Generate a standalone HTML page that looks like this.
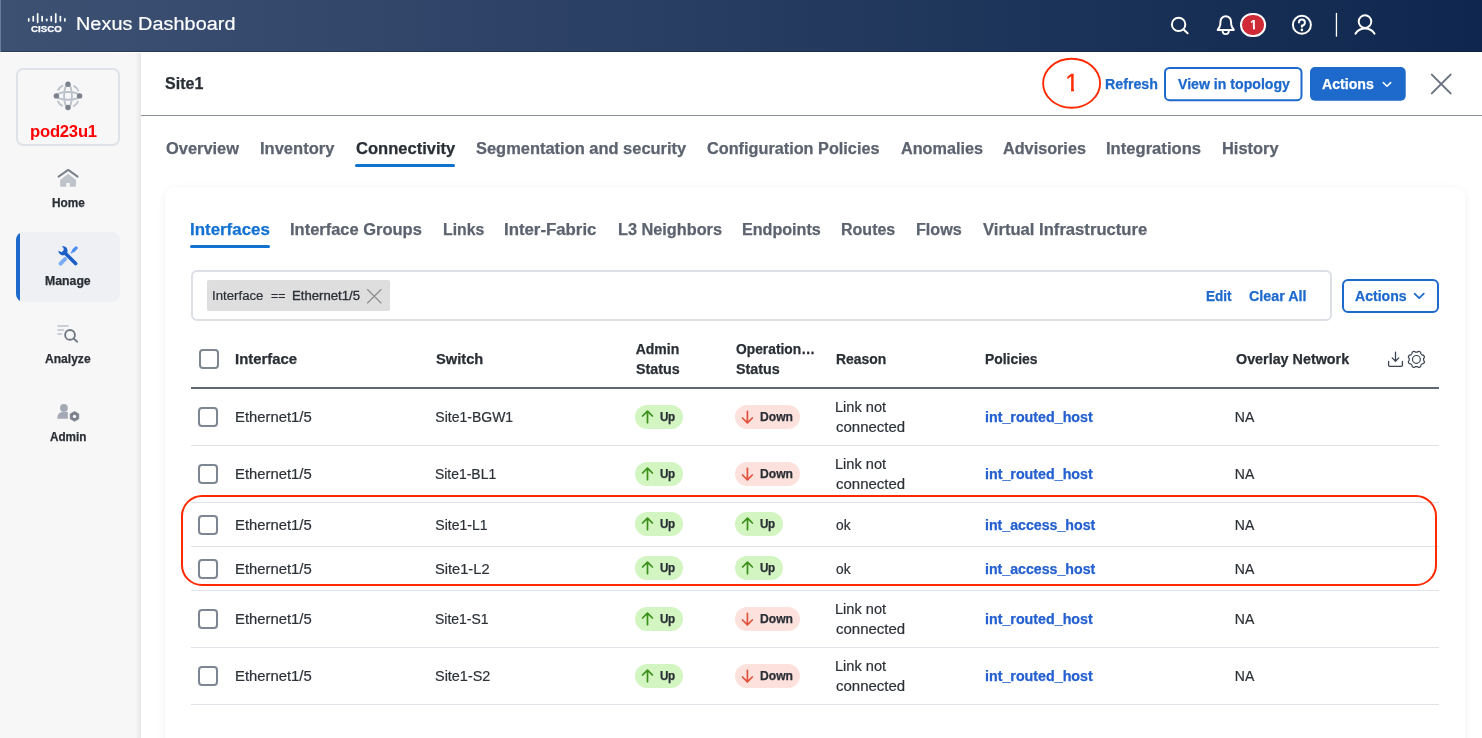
<!DOCTYPE html>
<html lang="en"><head><meta charset="utf-8"><title>Nexus Dashboard</title>
<style>
html,body{margin:0;padding:0}
body{width:1482px;height:738px;overflow:hidden;position:relative;background:#fff;font-family:"Liberation Sans",sans-serif}
.a{position:absolute}
.t{position:absolute;line-height:1;white-space:pre;transform-origin:0 0}
svg{position:absolute;overflow:visible}
.cb{position:absolute;width:16px;height:16px;border:2px solid #7e8694;border-radius:4px;background:#fff}
.hl{position:absolute;left:191px;width:1248px;height:1px;background:#dfe3e8}
.up{position:absolute;width:48px;height:24px;border-radius:12px;background:#d2f5c1}
.dn{position:absolute;width:65px;height:24px;border-radius:12px;background:#fde1dd}
</style></head><body>
<div class="a" style="left:0;top:0;width:1482px;height:738px;will-change:transform">
<!-- header -->
<div class="a" style="left:0;top:0;width:1482px;height:52px;background:linear-gradient(90deg,#3d5173 0%,#0f274e 100%)"></div>
<div class="a" style="left:0;top:51px;width:1482px;height:1px;background:rgba(10,25,60,.35)"></div>
<div class="a" style="left:0;top:0;width:1px;height:52px;background:#6b7d9b"></div>
<svg style="left:0;top:0" width="1482" height="52" viewBox="0 0 1482 52">
 <g fill="#fff">
  <rect x="27.9" y="18" width="1.7" height="3.8" rx=".8"/><rect x="32.4" y="15.8" width="1.7" height="6" rx=".8"/><rect x="36.8" y="13.1" width="1.7" height="10.1" rx=".8"/><rect x="41.3" y="15.8" width="1.7" height="6" rx=".8"/><rect x="45.9" y="18.4" width="1.7" height="3.2" rx=".8"/><rect x="50.4" y="15.8" width="1.7" height="6" rx=".8"/><rect x="54.9" y="13.1" width="1.7" height="10.1" rx=".8"/><rect x="59.5" y="15.8" width="1.7" height="6" rx=".8"/><rect x="64" y="18" width="1.7" height="3.8" rx=".8"/>
 </g>
 <g fill="none" stroke="#fff" stroke-width="2" stroke-linecap="round" stroke-linejoin="round">
  <circle cx="1178.6" cy="24.4" r="6.7"/><path d="M1183.6 29.6 L1187.6 33.3"/>
  <path d="M1217.7 29.9 L1219.3 27.4 C1220.5 25.5 1220.5 23.5 1220.5 21.4 A5.25 5.25 0 0 1 1231 21.4 C1231 23.5 1231 25.5 1232.2 27.4 L1233.8 29.9 Z"/><path d="M1222.6 31 A3.1 3.1 0 0 0 1228.8 31" stroke-width="1.8"/>
  <circle cx="1301.9" cy="24.8" r="9"/>
  <path d="M1298.9 22.6 A3 3 0 1 1 1301.9 25.6 L1301.9 26.8" stroke-width="2"/>
  <circle cx="1365" cy="21.6" r="6.3"/><path d="M1355.5 33.6 A11.5 11.5 0 0 1 1374.5 33.6"/>
 </g>
 <circle cx="1301.9" cy="29.9" r="1.3" fill="#fff"/>
 <rect x="1335.8" y="12.9" width="1.3" height="23.8" fill="#fff"/>
 <rect x="1241" y="13.9" width="24.1" height="22.1" rx="11.05" fill="#cf2a36" stroke="#fff" stroke-width="2"/>
</svg>
<!-- sidebar -->
<div class="a" style="left:0;top:53px;width:141px;height:685px;background:#f7f7f7"></div>
<div class="a" style="left:135px;top:53px;width:6px;height:685px;background:linear-gradient(90deg,rgba(0,0,0,0),rgba(0,0,0,.065))"></div>
<div class="a" style="left:16px;top:68px;width:100px;height:74px;border:2px solid #dfe3e8;border-radius:7px"></div>
<div class="a" style="left:16px;top:232px;width:104px;height:70px;border-radius:8px;background:#eef0f3;overflow:hidden"><div class="a" style="left:0;top:0;width:4px;height:70px;background:#1d69cc"></div></div>
<svg style="left:0;top:52px" width="141" height="686" viewBox="0 52 141 686">
 <!-- globe -->
 <g fill="none" stroke="#bcc2cb" stroke-width="1.9">
  <ellipse cx="68" cy="95.9" rx="3.9" ry="11.6"/><ellipse cx="68" cy="95.9" rx="11.6" ry="3.9"/>
  <circle cx="68" cy="95.9" r="11.6" stroke-dasharray="7.4 10.82" stroke-dashoffset="-5.41"/>
 </g>
 <g fill="#7b828e"><circle cx="68" cy="84.3" r="2.7"/><circle cx="68" cy="107.5" r="2.7"/><circle cx="56.4" cy="95.9" r="2.7"/><circle cx="79.6" cy="95.9" r="2.7"/></g>
 <!-- home -->
 <path d="M60.1 180 L68.2 173.8 L76 180 L76 185.3 Q76 186.8 74.5 186.8 L69.8 186.8 L69.8 183 L66.3 183 L66.3 186.8 L61.6 186.8 Q60.1 186.8 60.1 185.3 Z" fill="#bec3cc"/>
 <path d="M58.6 176.6 L68.2 169.9 L77.6 176.6" fill="none" stroke="#7b828e" stroke-width="2" stroke-linecap="round" stroke-linejoin="round"/>
 <!-- manage -->
 <g stroke-linecap="round" fill="none">
  <path d="M60.6 263.6 L65 259.2" stroke="#7baaf7" stroke-width="4"/>
  <path d="M71.5 252.6 L75.6 248.4" stroke="#6ea1f6" stroke-width="2"/>
  <path d="M73.6 250.5 L76.2 247.9" stroke="#4d8df2" stroke-width="3.2"/>
  <path d="M64.6 252.6 L75.6 263.6" stroke="#1b5fc7" stroke-width="3.6"/>
 </g>
 <path d="M61.6 246.4 A4.6 4.6 0 1 1 58.4 250.6 L61.2 252.2 L63.6 250.6 L63.6 248 Z" fill="#1b5fc7"/>
 <!-- analyze -->
 <g fill="none" stroke="#bcc1ca" stroke-width="1.6" stroke-linecap="round"><path d="M58 326 L68 326"/><path d="M58 330 L63.6 330"/><path d="M58 334 L61.6 334"/></g>
 <g fill="none" stroke="#6f7783" stroke-width="1.9" stroke-linecap="round"><circle cx="70" cy="334.9" r="4.9"/><path d="M73.8 338.6 L77.2 341.7"/></g>
 <!-- admin -->
 <circle cx="63.9" cy="407.9" r="3.9" fill="#a4aab5"/>
 <path d="M57.2 418.8 Q57.6 412 62.5 412 L67.9 412 L67.9 418.8 Z" fill="#a4aab5"/>
 <path d="M74.5 411.5 L78.74 413.95 L78.74 418.85 L74.5 421.3 L70.26 418.85 L70.26 413.95 Z" fill="#7b828e" stroke="#7b828e" stroke-width="0.8" stroke-linejoin="round"/>
 <circle cx="74.5" cy="416.4" r="1.7" fill="#f7f7f7"/>
</svg>
<!-- panel -->
<div class="a" style="left:141px;top:115px;width:1341px;height:1px;background:#8d939e"></div>
<!-- top right controls -->
<svg style="left:1030px;top:52px" width="452" height="64" viewBox="1030 52 452 64">
 <ellipse cx="1071.6" cy="83.3" rx="28.5" ry="24.5" fill="none" stroke="#ff2a00" stroke-width="1.9"/>
 <rect x="1165" y="68" width="136.5" height="32.2" rx="4.5" fill="#fff" stroke="#1d69cc" stroke-width="2"/>
 <rect x="1310" y="67" width="95.7" height="33.8" rx="5" fill="#1d69cc"/>
 <path d="M1383.3 82.6 L1387 86.2 L1390.7 82.6" fill="none" stroke="#fff" stroke-width="1.5" stroke-linecap="round" stroke-linejoin="round"/>
 <path d="M1431.8 74.6 L1450.6 93.4 M1450.6 74.6 L1431.8 93.4" fill="none" stroke="#6b7280" stroke-width="2" stroke-linecap="round"/>
</svg>
<!-- tab underlines -->
<div class="a" style="left:355px;top:164px;width:100px;height:3px;border-radius:1.5px;background:#1272d2"></div>
<!-- card -->
<div class="a" style="left:165px;top:187px;width:1300px;height:600px;border-radius:10px;background:#fff;box-shadow:0 2px 9px rgba(0,0,0,.065)"></div>
<div class="a" style="left:190px;top:245px;width:80px;height:3px;border-radius:1.5px;background:#1272d2"></div>
<!-- filter -->
<div class="a" style="left:191px;top:270px;width:1137px;height:47px;border:2px solid #dcdfe5;border-radius:6px;background:#fff"></div>
<div class="a" style="left:207px;top:280px;width:183px;height:31px;border-radius:2px;background:#dedede"></div>
<div class="a" style="left:1342px;top:279px;width:93px;height:30px;border:2px solid #1d69cc;border-radius:6px;background:#fff"></div>
<svg style="left:180px;top:260px" width="1280" height="130" viewBox="180 260 1280 130">
 <path d="M367.5 289.5 L381 303 M381 289.5 L367.5 303" fill="none" stroke="#8a8a8a" stroke-width="1.1" stroke-linecap="round"/>
 <path d="M1414.6 293.6 L1419.2 298.2 L1423.8 293.6" fill="none" stroke="#1d69cc" stroke-width="1.7" stroke-linecap="round" stroke-linejoin="round"/>
 <!-- download -->
 <g fill="none" stroke="#3c4350" stroke-width="1.3" stroke-linecap="round" stroke-linejoin="round">
  <path d="M1388.6 361.4 L1388.6 365.2 Q1388.6 366.3 1389.7 366.3 L1401.3 366.3 Q1402.4 366.3 1402.4 365.2 L1402.4 361.4"/>
  <path d="M1395.5 352.2 L1395.5 361.3 M1392.2 357.9 L1395.5 361.3 L1398.8 357.9"/>
 </g>
 <!-- gear -->
 <g fill="none" stroke="#3c4350" stroke-width="1.2" stroke-linejoin="round">
  <circle cx="1416.4" cy="359.4" r="3.9"/>
  <path id="gear" d="M1423.58 359.40 L1423.58 359.68 L1423.58 359.96 L1423.60 360.25 L1423.73 360.56 L1424.05 360.92 L1424.35 361.31 L1424.43 361.67 L1424.39 362.00 L1424.30 362.31 L1424.18 362.62 L1424.04 362.92 L1423.88 363.21 L1423.68 363.48 L1423.37 363.67 L1422.89 363.73 L1422.41 363.76 L1422.10 363.89 L1421.87 364.08 L1421.68 364.28 L1421.48 364.48 L1421.28 364.68 L1421.08 364.87 L1420.89 365.10 L1420.76 365.41 L1420.73 365.89 L1420.67 366.37 L1420.48 366.68 L1420.21 366.88 L1419.92 367.04 L1419.62 367.18 L1419.31 367.30 L1419.00 367.39 L1418.67 367.43 L1418.31 367.35 L1417.92 367.05 L1417.56 366.73 L1417.25 366.60 L1416.96 366.58 L1416.68 366.58 L1416.40 366.58 L1416.12 366.58 L1415.84 366.58 L1415.55 366.60 L1415.24 366.73 L1414.88 367.05 L1414.49 367.35 L1414.13 367.43 L1413.80 367.39 L1413.49 367.30 L1413.18 367.18 L1412.88 367.04 L1412.59 366.88 L1412.32 366.68 L1412.13 366.37 L1412.07 365.89 L1412.04 365.41 L1411.91 365.10 L1411.72 364.87 L1411.52 364.68 L1411.32 364.48 L1411.12 364.28 L1410.93 364.08 L1410.70 363.89 L1410.39 363.76 L1409.91 363.73 L1409.43 363.67 L1409.12 363.48 L1408.92 363.21 L1408.76 362.92 L1408.62 362.62 L1408.50 362.31 L1408.41 362.00 L1408.37 361.67 L1408.45 361.31 L1408.75 360.92 L1409.07 360.56 L1409.20 360.25 L1409.22 359.96 L1409.22 359.68 L1409.22 359.40 L1409.22 359.12 L1409.22 358.84 L1409.20 358.55 L1409.07 358.24 L1408.75 357.88 L1408.45 357.49 L1408.37 357.13 L1408.41 356.80 L1408.50 356.49 L1408.62 356.18 L1408.76 355.88 L1408.92 355.59 L1409.12 355.32 L1409.43 355.13 L1409.91 355.07 L1410.39 355.04 L1410.70 354.91 L1410.93 354.72 L1411.12 354.52 L1411.32 354.32 L1411.52 354.12 L1411.72 353.93 L1411.91 353.70 L1412.04 353.39 L1412.07 352.91 L1412.13 352.43 L1412.32 352.12 L1412.59 351.92 L1412.88 351.76 L1413.18 351.62 L1413.49 351.50 L1413.80 351.41 L1414.13 351.37 L1414.49 351.45 L1414.88 351.75 L1415.24 352.07 L1415.55 352.20 L1415.84 352.22 L1416.12 352.22 L1416.40 352.22 L1416.68 352.22 L1416.96 352.22 L1417.25 352.20 L1417.56 352.07 L1417.92 351.75 L1418.31 351.45 L1418.67 351.37 L1419.00 351.41 L1419.31 351.50 L1419.62 351.62 L1419.92 351.76 L1420.21 351.92 L1420.48 352.12 L1420.67 352.43 L1420.73 352.91 L1420.76 353.39 L1420.89 353.70 L1421.08 353.93 L1421.28 354.12 L1421.48 354.32 L1421.68 354.52 L1421.87 354.72 L1422.10 354.91 L1422.41 355.04 L1422.89 355.07 L1423.37 355.13 L1423.68 355.32 L1423.88 355.59 L1424.04 355.88 L1424.18 356.18 L1424.30 356.49 L1424.39 356.80 L1424.43 357.13 L1424.35 357.49 L1424.05 357.88 L1423.73 358.24 L1423.60 358.55 L1423.58 358.84 L1423.58 359.12 Z"/>
 </g>
</svg>
<!-- table -->
<div class="cb" style="left:199px;top:349px"></div>
<div class="a" style="left:191px;top:387px;width:1248px;height:2px;background:#5f6774"></div>
<div class="cb" style="left:198.3px;top:407.0px"></div>
<div class="hl" style="top:445px"></div>
<div class="up" style="left:635px;top:405.0px"></div>
<div class="dn" style="left:735px;top:405.0px"></div>
<div class="cb" style="left:198.3px;top:464.0px"></div>
<div class="hl" style="top:502px"></div>
<div class="up" style="left:635px;top:462.0px"></div>
<div class="dn" style="left:735px;top:462.0px"></div>
<div class="cb" style="left:198.3px;top:515.0px"></div>
<div class="hl" style="top:546px"></div>
<div class="up" style="left:635px;top:512.0px"></div>
<div class="up" style="left:735px;top:512.0px"></div>
<div class="cb" style="left:198.3px;top:559.0px"></div>
<div class="hl" style="top:590px"></div>
<div class="up" style="left:635px;top:556.0px"></div>
<div class="up" style="left:735px;top:556.0px"></div>
<div class="cb" style="left:198.3px;top:609.0px"></div>
<div class="hl" style="top:647px"></div>
<div class="up" style="left:635px;top:607.0px"></div>
<div class="dn" style="left:735px;top:607.0px"></div>
<div class="cb" style="left:198.3px;top:666.0px"></div>
<div class="hl" style="top:704px"></div>
<div class="up" style="left:635px;top:664.0px"></div>
<div class="dn" style="left:735px;top:664.0px"></div>
<svg style="left:0;top:0" width="1482" height="738" viewBox="0 0 1482 738"><g fill="none" stroke-width="1.7" stroke-linecap="round" stroke-linejoin="round"><path d="M647.5 422.7 L647.5 411.1 M642.6 416.0 L647.5 411.1 L652.4 416.0" stroke="#3a8f1a"/><path d="M747.4 411.3 L747.4 422.9 M742.5 418.0 L747.4 422.9 L752.3 418.0" stroke="#e0523c"/><path d="M647.5 479.7 L647.5 468.1 M642.6 473.0 L647.5 468.1 L652.4 473.0" stroke="#3a8f1a"/><path d="M747.4 468.3 L747.4 479.9 M742.5 475.0 L747.4 479.9 L752.3 475.0" stroke="#e0523c"/><path d="M647.5 529.7 L647.5 518.1 M642.6 523.0 L647.5 518.1 L652.4 523.0" stroke="#3a8f1a"/><path d="M747.5 529.7 L747.5 518.1 M742.6 523.0 L747.5 518.1 L752.4 523.0" stroke="#3a8f1a"/><path d="M647.5 573.7 L647.5 562.1 M642.6 567.0 L647.5 562.1 L652.4 567.0" stroke="#3a8f1a"/><path d="M747.5 573.7 L747.5 562.1 M742.6 567.0 L747.5 562.1 L752.4 567.0" stroke="#3a8f1a"/><path d="M647.5 624.7 L647.5 613.1 M642.6 618.0 L647.5 613.1 L652.4 618.0" stroke="#3a8f1a"/><path d="M747.4 613.3 L747.4 624.9 M742.5 620.0 L747.4 624.9 L752.3 620.0" stroke="#e0523c"/><path d="M647.5 681.7 L647.5 670.1 M642.6 675.0 L647.5 670.1 L652.4 675.0" stroke="#3a8f1a"/><path d="M747.4 670.3 L747.4 681.9 M742.5 677.0 L747.4 681.9 L752.3 677.0" stroke="#e0523c"/></g></svg>
<!-- red highlight -->
<div class="a" style="left:181.3px;top:495px;width:1251.8px;height:86.8px;border:2px solid #ff2a00;border-radius:21px"></div>
<span class="t" style="left:76.06px;top:14.66px;font-size:18px;font-weight:400;color:#fff;letter-spacing:0.067px;transform:scaleX(1.1000);-webkit-text-stroke-width:0.2px;">Nexus Dashboard</span>
<span class="t" style="left:31.33px;top:24.47px;font-size:9.6px;font-weight:700;color:#fff;letter-spacing:-0.000px;transform:scaleX(1.0146);-webkit-text-stroke-width:0.25px;">CISCO</span>
<span class="t" style="left:165.05px;top:75.56px;font-size:16px;font-weight:700;color:#2a2f36;letter-spacing:0.000px;-webkit-text-stroke-width:0.25px;">Site1</span>
<span class="t" style="left:1065.25px;top:70.68px;font-size:24px;font-weight:400;color:#ff2a00;letter-spacing:0.000px;-webkit-text-stroke:0.35px #ff2a00;">1</span>
<span class="t" style="left:1105.43px;top:77.35px;font-size:14px;font-weight:700;color:#1d69cc;letter-spacing:-0.000px;transform:scaleX(1.0152);-webkit-text-stroke-width:0.25px;">Refresh</span>
<span class="t" style="left:1177.74px;top:77.35px;font-size:14px;font-weight:700;color:#1d69cc;letter-spacing:0.000px;transform:scaleX(1.0089);-webkit-text-stroke-width:0.25px;">View in topology</span>
<span class="t" style="left:1322.38px;top:77.35px;font-size:14px;font-weight:700;color:#fff;letter-spacing:0.000px;transform:scaleX(1.0095);-webkit-text-stroke-width:0.25px;">Actions</span>
<span class="t" style="left:165.54px;top:140.96px;font-size:16px;font-weight:700;color:#5c636f;letter-spacing:0.000px;transform:scaleX(1.0257);-webkit-text-stroke-width:0.25px;">Overview</span>
<span class="t" style="left:259.51px;top:140.96px;font-size:16px;font-weight:700;color:#5c636f;letter-spacing:0.000px;transform:scaleX(1.0322);-webkit-text-stroke-width:0.25px;">Inventory</span>
<span class="t" style="left:355.53px;top:140.96px;font-size:16px;font-weight:700;color:#2a2f36;letter-spacing:0.000px;transform:scaleX(1.0343);-webkit-text-stroke-width:0.25px;">Connectivity</span>
<span class="t" style="left:475.53px;top:140.96px;font-size:16px;font-weight:700;color:#5c636f;letter-spacing:0.000px;transform:scaleX(1.0279);-webkit-text-stroke-width:0.25px;">Segmentation and security</span>
<span class="t" style="left:707.04px;top:140.96px;font-size:16px;font-weight:700;color:#5c636f;letter-spacing:0.000px;transform:scaleX(1.0159);-webkit-text-stroke-width:0.25px;">Configuration Policies</span>
<span class="t" style="left:900.64px;top:140.96px;font-size:16px;font-weight:700;color:#5c636f;letter-spacing:-0.000px;transform:scaleX(1.0136);-webkit-text-stroke-width:0.25px;">Anomalies</span>
<span class="t" style="left:1003.14px;top:140.96px;font-size:16px;font-weight:700;color:#5c636f;letter-spacing:0.000px;transform:scaleX(1.0135);-webkit-text-stroke-width:0.25px;">Advisories</span>
<span class="t" style="left:1106.25px;top:140.96px;font-size:16px;font-weight:700;color:#5c636f;letter-spacing:0.000px;transform:scaleX(1.0377);-webkit-text-stroke-width:0.25px;">Integrations</span>
<span class="t" style="left:1222.01px;top:140.96px;font-size:16px;font-weight:700;color:#5c636f;letter-spacing:0.000px;transform:scaleX(1.0256);-webkit-text-stroke-width:0.25px;">History</span>
<span class="t" style="left:189.98px;top:221.96px;font-size:16px;font-weight:700;color:#1272d2;letter-spacing:0.000px;transform:scaleX(1.0561);-webkit-text-stroke-width:0.25px;">Interfaces</span>
<span class="t" style="left:290.26px;top:221.96px;font-size:16px;font-weight:700;color:#5c636f;letter-spacing:0.000px;transform:scaleX(1.0296);-webkit-text-stroke-width:0.25px;">Interface Groups</span>
<span class="t" style="left:442.56px;top:221.96px;font-size:16px;font-weight:700;color:#5c636f;letter-spacing:0.000px;transform:scaleX(0.9862);-webkit-text-stroke-width:0.25px;">Links</span>
<span class="t" style="left:503.99px;top:221.96px;font-size:16px;font-weight:700;color:#5c636f;letter-spacing:0.000px;transform:scaleX(1.0501);-webkit-text-stroke-width:0.25px;">Inter-Fabric</span>
<span class="t" style="left:617.52px;top:221.96px;font-size:16px;font-weight:700;color:#5c636f;letter-spacing:0.000px;transform:scaleX(1.0173);-webkit-text-stroke-width:0.25px;">L3 Neighbors</span>
<span class="t" style="left:742.03px;top:221.96px;font-size:16px;font-weight:700;color:#5c636f;letter-spacing:0.000px;transform:scaleX(1.0064);-webkit-text-stroke-width:0.25px;">Endpoints</span>
<span class="t" style="left:841.04px;top:221.96px;font-size:16px;font-weight:700;color:#5c636f;letter-spacing:0.000px;-webkit-text-stroke-width:0.25px;">Routes</span>
<span class="t" style="left:915.78px;top:221.96px;font-size:16px;font-weight:700;color:#5c636f;letter-spacing:-0.000px;transform:scaleX(1.0075);-webkit-text-stroke-width:0.25px;">Flows</span>
<span class="t" style="left:982.93px;top:221.96px;font-size:16px;font-weight:700;color:#5c636f;letter-spacing:0.000px;transform:scaleX(1.0395);-webkit-text-stroke-width:0.25px;">Virtual Infrastructure</span>
<span class="t" style="left:211.88px;top:289.84px;font-size:12px;font-weight:400;color:#2a2f36;letter-spacing:0.009px;transform:scaleX(1.1000);-webkit-text-stroke-width:0.2px;">Interface</span>
<span class="t" style="left:270.70px;top:289.84px;font-size:12px;font-weight:400;color:#2a2f36;letter-spacing:0.000px;transform:scaleX(1.0209);-webkit-text-stroke-width:0.2px;">==</span>
<span class="t" style="left:291.67px;top:289.84px;font-size:12px;font-weight:400;color:#2a2f36;letter-spacing:0.000px;transform:scaleX(1.0968);-webkit-text-stroke:0.3px #2a2f36;">Ethernet1/5</span>
<span class="t" style="left:1205.86px;top:289.00px;font-size:14px;font-weight:700;color:#1d69cc;letter-spacing:-0.049px;transform:scaleX(0.9700);-webkit-text-stroke-width:0.25px;">Edit</span>
<span class="t" style="left:1248.80px;top:289.00px;font-size:14px;font-weight:700;color:#1d69cc;letter-spacing:0.000px;transform:scaleX(1.0218);-webkit-text-stroke-width:0.25px;">Clear All</span>
<span class="t" style="left:1355.18px;top:289.00px;font-size:14px;font-weight:700;color:#1d69cc;letter-spacing:-0.000px;transform:scaleX(1.0055);-webkit-text-stroke-width:0.25px;">Actions</span>
<span class="t" style="left:235.29px;top:351.90px;font-size:14px;font-weight:700;color:#2a2f36;letter-spacing:0.000px;transform:scaleX(1.0611);-webkit-text-stroke-width:0.25px;">Interface</span>
<span class="t" style="left:435.62px;top:351.90px;font-size:14px;font-weight:700;color:#2a2f36;letter-spacing:0.000px;transform:scaleX(1.0471);-webkit-text-stroke-width:0.25px;">Switch</span>
<span class="t" style="left:635.68px;top:342.15px;font-size:14px;font-weight:700;color:#2a2f36;letter-spacing:0.000px;-webkit-text-stroke-width:0.25px;">Admin</span>
<span class="t" style="left:635.63px;top:361.90px;font-size:14px;font-weight:700;color:#2a2f36;letter-spacing:0.000px;transform:scaleX(1.0201);-webkit-text-stroke-width:0.25px;">Status</span>
<span class="t" style="left:735.87px;top:342.15px;font-size:14px;font-weight:700;color:#2a2f36;letter-spacing:0.000px;transform:scaleX(0.9862);-webkit-text-stroke-width:0.25px;">Operation…</span>
<span class="t" style="left:735.88px;top:361.90px;font-size:14px;font-weight:700;color:#2a2f36;letter-spacing:0.000px;transform:scaleX(1.0201);-webkit-text-stroke-width:0.25px;">Status</span>
<span class="t" style="left:835.59px;top:351.90px;font-size:14px;font-weight:700;color:#2a2f36;letter-spacing:0.000px;transform:scaleX(0.9951);-webkit-text-stroke-width:0.25px;">Reason</span>
<span class="t" style="left:985.25px;top:351.90px;font-size:14px;font-weight:700;color:#2a2f36;letter-spacing:0.000px;transform:scaleX(0.9924);-webkit-text-stroke-width:0.25px;">Policies</span>
<span class="t" style="left:1235.51px;top:351.90px;font-size:14px;font-weight:700;color:#2a2f36;letter-spacing:0.000px;transform:scaleX(1.0236);-webkit-text-stroke-width:0.25px;">Overlay Network</span>
<span class="t" style="left:234.89px;top:410.15px;font-size:14px;font-weight:400;color:#2c3137;letter-spacing:0.000px;transform:scaleX(1.0592);-webkit-text-stroke-width:0.2px;">Ethernet1/5</span>
<span class="t" style="left:435.34px;top:410.15px;font-size:14px;font-weight:400;color:#2c3137;letter-spacing:0.000px;-webkit-text-stroke-width:0.2px;">Site1-BGW1</span>
<span class="t" style="left:660.10px;top:410.74px;font-size:12px;font-weight:700;color:#2a2f36;letter-spacing:-0.403px;transform:scaleX(0.9700);-webkit-text-stroke-width:0.25px;">Up</span>
<span class="t" style="left:759.81px;top:410.74px;font-size:12px;font-weight:700;color:#2a2f36;letter-spacing:0.000px;transform:scaleX(1.0102);-webkit-text-stroke-width:0.25px;">Down</span>
<span class="t" style="left:835.21px;top:400.15px;font-size:14px;font-weight:400;color:#2c3137;letter-spacing:0.000px;transform:scaleX(1.0415);-webkit-text-stroke-width:0.2px;">Link not</span>
<span class="t" style="left:835.83px;top:420.15px;font-size:14px;font-weight:400;color:#2c3137;letter-spacing:0.000px;transform:scaleX(1.0707);-webkit-text-stroke-width:0.2px;">connected</span>
<span class="t" style="left:985.34px;top:410.15px;font-size:14px;font-weight:700;color:#2460cf;letter-spacing:-0.000px;transform:scaleX(1.0187);-webkit-text-stroke-width:0.25px;">int_routed_host</span>
<span class="t" style="left:1234.85px;top:410.15px;font-size:14px;font-weight:400;color:#2c3137;letter-spacing:0.000px;-webkit-text-stroke-width:0.2px;">NA</span>
<span class="t" style="left:234.89px;top:467.15px;font-size:14px;font-weight:400;color:#2c3137;letter-spacing:0.000px;transform:scaleX(1.0592);-webkit-text-stroke-width:0.2px;">Ethernet1/5</span>
<span class="t" style="left:435.34px;top:467.15px;font-size:14px;font-weight:400;color:#2c3137;letter-spacing:0.000px;transform:scaleX(0.9941);-webkit-text-stroke-width:0.2px;">Site1-BL1</span>
<span class="t" style="left:660.10px;top:467.74px;font-size:12px;font-weight:700;color:#2a2f36;letter-spacing:-0.403px;transform:scaleX(0.9700);-webkit-text-stroke-width:0.25px;">Up</span>
<span class="t" style="left:759.81px;top:467.74px;font-size:12px;font-weight:700;color:#2a2f36;letter-spacing:0.000px;transform:scaleX(1.0102);-webkit-text-stroke-width:0.25px;">Down</span>
<span class="t" style="left:835.21px;top:457.15px;font-size:14px;font-weight:400;color:#2c3137;letter-spacing:0.000px;transform:scaleX(1.0415);-webkit-text-stroke-width:0.2px;">Link not</span>
<span class="t" style="left:835.83px;top:477.15px;font-size:14px;font-weight:400;color:#2c3137;letter-spacing:0.000px;transform:scaleX(1.0707);-webkit-text-stroke-width:0.2px;">connected</span>
<span class="t" style="left:985.34px;top:467.15px;font-size:14px;font-weight:700;color:#2460cf;letter-spacing:-0.000px;transform:scaleX(1.0187);-webkit-text-stroke-width:0.25px;">int_routed_host</span>
<span class="t" style="left:1234.85px;top:467.15px;font-size:14px;font-weight:400;color:#2c3137;letter-spacing:0.000px;-webkit-text-stroke-width:0.2px;">NA</span>
<span class="t" style="left:234.89px;top:517.65px;font-size:14px;font-weight:400;color:#2c3137;letter-spacing:0.000px;transform:scaleX(1.0592);-webkit-text-stroke-width:0.2px;">Ethernet1/5</span>
<span class="t" style="left:435.33px;top:517.65px;font-size:14px;font-weight:400;color:#2c3137;letter-spacing:0.000px;-webkit-text-stroke-width:0.2px;">Site1-L1</span>
<span class="t" style="left:660.10px;top:517.74px;font-size:12px;font-weight:700;color:#2a2f36;letter-spacing:-0.403px;transform:scaleX(0.9700);-webkit-text-stroke-width:0.25px;">Up</span>
<span class="t" style="left:760.10px;top:517.74px;font-size:12px;font-weight:700;color:#2a2f36;letter-spacing:-0.403px;transform:scaleX(0.9700);-webkit-text-stroke-width:0.25px;">Up</span>
<span class="t" style="left:835.88px;top:517.65px;font-size:14px;font-weight:400;color:#2c3137;letter-spacing:0.000px;transform:scaleX(0.9827);-webkit-text-stroke-width:0.2px;">ok</span>
<span class="t" style="left:985.34px;top:517.65px;font-size:14px;font-weight:700;color:#2460cf;letter-spacing:0.000px;transform:scaleX(1.0118);-webkit-text-stroke-width:0.25px;">int_access_host</span>
<span class="t" style="left:1234.85px;top:517.65px;font-size:14px;font-weight:400;color:#2c3137;letter-spacing:0.000px;-webkit-text-stroke-width:0.2px;">NA</span>
<span class="t" style="left:234.89px;top:561.65px;font-size:14px;font-weight:400;color:#2c3137;letter-spacing:0.000px;transform:scaleX(1.0592);-webkit-text-stroke-width:0.2px;">Ethernet1/5</span>
<span class="t" style="left:435.30px;top:561.65px;font-size:14px;font-weight:400;color:#2c3137;letter-spacing:0.000px;transform:scaleX(1.0455);-webkit-text-stroke-width:0.2px;">Site1-L2</span>
<span class="t" style="left:660.10px;top:561.74px;font-size:12px;font-weight:700;color:#2a2f36;letter-spacing:-0.403px;transform:scaleX(0.9700);-webkit-text-stroke-width:0.25px;">Up</span>
<span class="t" style="left:760.10px;top:561.74px;font-size:12px;font-weight:700;color:#2a2f36;letter-spacing:-0.403px;transform:scaleX(0.9700);-webkit-text-stroke-width:0.25px;">Up</span>
<span class="t" style="left:835.88px;top:561.65px;font-size:14px;font-weight:400;color:#2c3137;letter-spacing:0.000px;transform:scaleX(0.9827);-webkit-text-stroke-width:0.2px;">ok</span>
<span class="t" style="left:985.34px;top:561.65px;font-size:14px;font-weight:700;color:#2460cf;letter-spacing:0.000px;transform:scaleX(1.0118);-webkit-text-stroke-width:0.25px;">int_access_host</span>
<span class="t" style="left:1234.85px;top:561.65px;font-size:14px;font-weight:400;color:#2c3137;letter-spacing:0.000px;-webkit-text-stroke-width:0.2px;">NA</span>
<span class="t" style="left:234.89px;top:612.15px;font-size:14px;font-weight:400;color:#2c3137;letter-spacing:0.000px;transform:scaleX(1.0592);-webkit-text-stroke-width:0.2px;">Ethernet1/5</span>
<span class="t" style="left:435.34px;top:612.15px;font-size:14px;font-weight:400;color:#2c3137;letter-spacing:0.000px;transform:scaleX(0.9958);-webkit-text-stroke-width:0.2px;">Site1-S1</span>
<span class="t" style="left:660.10px;top:612.74px;font-size:12px;font-weight:700;color:#2a2f36;letter-spacing:-0.403px;transform:scaleX(0.9700);-webkit-text-stroke-width:0.25px;">Up</span>
<span class="t" style="left:759.81px;top:612.74px;font-size:12px;font-weight:700;color:#2a2f36;letter-spacing:0.000px;transform:scaleX(1.0102);-webkit-text-stroke-width:0.25px;">Down</span>
<span class="t" style="left:835.21px;top:602.15px;font-size:14px;font-weight:400;color:#2c3137;letter-spacing:0.000px;transform:scaleX(1.0415);-webkit-text-stroke-width:0.2px;">Link not</span>
<span class="t" style="left:835.83px;top:622.15px;font-size:14px;font-weight:400;color:#2c3137;letter-spacing:0.000px;transform:scaleX(1.0707);-webkit-text-stroke-width:0.2px;">connected</span>
<span class="t" style="left:985.34px;top:612.15px;font-size:14px;font-weight:700;color:#2460cf;letter-spacing:-0.000px;transform:scaleX(1.0187);-webkit-text-stroke-width:0.25px;">int_routed_host</span>
<span class="t" style="left:1234.85px;top:612.15px;font-size:14px;font-weight:400;color:#2c3137;letter-spacing:0.000px;-webkit-text-stroke-width:0.2px;">NA</span>
<span class="t" style="left:234.89px;top:669.15px;font-size:14px;font-weight:400;color:#2c3137;letter-spacing:0.000px;transform:scaleX(1.0592);-webkit-text-stroke-width:0.2px;">Ethernet1/5</span>
<span class="t" style="left:435.31px;top:669.15px;font-size:14px;font-weight:400;color:#2c3137;letter-spacing:-0.000px;transform:scaleX(1.0310);-webkit-text-stroke-width:0.2px;">Site1-S2</span>
<span class="t" style="left:660.10px;top:669.74px;font-size:12px;font-weight:700;color:#2a2f36;letter-spacing:-0.403px;transform:scaleX(0.9700);-webkit-text-stroke-width:0.25px;">Up</span>
<span class="t" style="left:759.81px;top:669.74px;font-size:12px;font-weight:700;color:#2a2f36;letter-spacing:0.000px;transform:scaleX(1.0102);-webkit-text-stroke-width:0.25px;">Down</span>
<span class="t" style="left:835.21px;top:659.15px;font-size:14px;font-weight:400;color:#2c3137;letter-spacing:0.000px;transform:scaleX(1.0415);-webkit-text-stroke-width:0.2px;">Link not</span>
<span class="t" style="left:835.83px;top:679.15px;font-size:14px;font-weight:400;color:#2c3137;letter-spacing:0.000px;transform:scaleX(1.0707);-webkit-text-stroke-width:0.2px;">connected</span>
<span class="t" style="left:985.34px;top:669.15px;font-size:14px;font-weight:700;color:#2460cf;letter-spacing:-0.000px;transform:scaleX(1.0187);-webkit-text-stroke-width:0.25px;">int_routed_host</span>
<span class="t" style="left:1234.85px;top:669.15px;font-size:14px;font-weight:400;color:#2c3137;letter-spacing:0.000px;-webkit-text-stroke-width:0.2px;">NA</span>
<span class="t" style="left:30.24px;top:123.34px;font-size:17.2px;font-weight:700;color:#ff0000;letter-spacing:-0.248px;transform:scaleX(0.9700);-webkit-text-stroke-width:0;">pod23u1</span>
<span class="t" style="left:51.72px;top:196.84px;font-size:12px;font-weight:700;color:#2a2f36;letter-spacing:0.000px;transform:scaleX(0.9861);-webkit-text-stroke-width:0.25px;">Home</span>
<span class="t" style="left:45.20px;top:275.04px;font-size:12px;font-weight:700;color:#2a2f36;letter-spacing:0.000px;transform:scaleX(1.0229);-webkit-text-stroke-width:0.25px;">Manage</span>
<span class="t" style="left:45.43px;top:353.04px;font-size:12px;font-weight:700;color:#2a2f36;letter-spacing:-0.000px;transform:scaleX(1.0054);-webkit-text-stroke-width:0.25px;">Analyze</span>
<span class="t" style="left:50.24px;top:431.04px;font-size:12px;font-weight:700;color:#2a2f36;letter-spacing:0.000px;transform:scaleX(0.9748);-webkit-text-stroke-width:0.25px;">Admin</span>
<span class="t" style="left:1250.37px;top:18.94px;font-size:12px;font-weight:700;color:#fff;letter-spacing:0.000px;-webkit-text-stroke-width:0.25px;">1</span>
<div class="a" style="left:1249.4px;top:26.8px;width:3.3px;height:2.9px;background:#cf2a36"></div><div class="a" style="left:1255.2px;top:26.8px;width:3.3px;height:2.9px;background:#cf2a36"></div><div class="a" style="left:1064px;top:88px;width:7.3px;height:4px;background:#fff"></div><div class="a" style="left:1074.4px;top:88px;width:6px;height:4px;background:#fff"></div>
</div>
</body></html>
